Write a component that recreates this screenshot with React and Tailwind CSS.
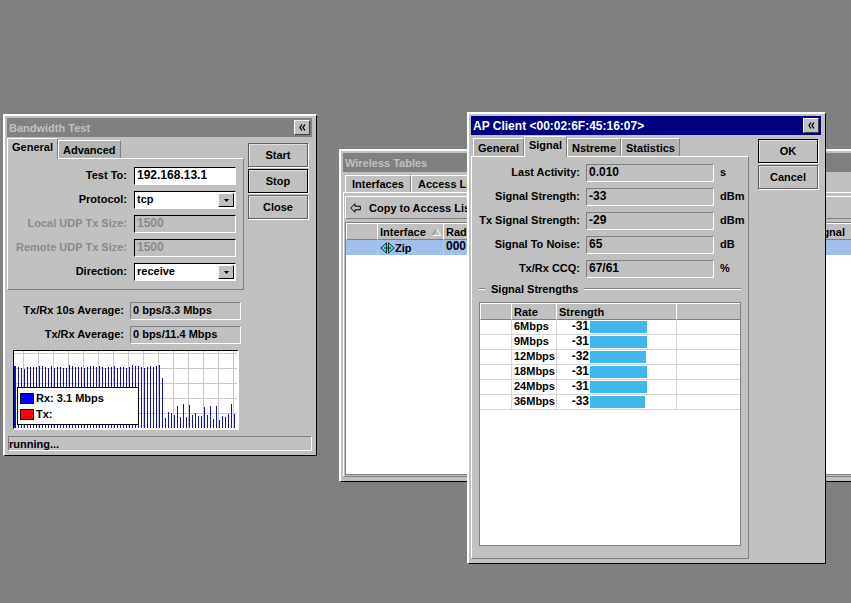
import React, { useState } from 'react';

const RATES = [
  { rate: '6Mbps', strength: -31 },
  { rate: '9Mbps', strength: -31 },
  { rate: '12Mbps', strength: -32 },
  { rate: '18Mbps', strength: -31 },
  { rate: '24Mbps', strength: -31 },
  { rate: '36Mbps', strength: -33 },
];

// throughput samples, one bar every 3px
const HIGH = [61, 60, 59, 61, 61, 61, 61, 62, 62, 61, 60, 62, 60, 61, 61, 60, 60, 63, 62, 61, 61, 61, 60];
const MIDDLE = [61, 62, 62, 61, 62, 61, 60, 61, 61, 62, 60, 61, 61, 60, 61, 63, 62, 62, 61, 60, 61, 62, 61, 62, 63];
const LOW = [50, 10, 16, 15, 13, 22, 11, 24, 11, 23, 13, 15, 12, 12, 21, 13, 22, 9, 22, 8, 12, 11, 14, 24, 14];
const SAMPLES = [...HIGH, ...MIDDLE, ...LOW];

const Window = ({ title, active, className, children }) => (
  <section
    className={`absolute flex flex-col border-t-2 border-l-2 border-r border-b border-t-white border-l-white border-r-black border-b-black bg-[#c0c0c0] pt-0.5 pl-0.5 pr-1 pb-1 ${className}`}
  >
    <header
      className={`flex h-[19px] items-center justify-between pl-0.5 pr-0.5 ${
        active ? 'bg-[#000080] text-white' : 'bg-[#808080] text-[#c0c0c0]'
      }`}
    >
      <h2 className={active ? 'text-[12px]' : 'text-[11px]'}>{title}</h2>
      <button
        type="button"
        aria-label="Collapse"
        className="flex h-[15px] w-4 items-center justify-center border border-t-white border-l-white border-r-[#404040] border-b-[#404040] bg-[#c0c0c0] text-black"
      >
        <svg width="7" height="7" viewBox="0 0 7 7" fill="none" stroke="currentColor" strokeWidth="1.3">
          <path d="M3 0.5 L1 3.5 L3 6.5 M6 0.5 L4 3.5 L6 6.5" />
        </svg>
      </button>
    </header>
    {children}
  </section>
);

const Tab = ({ active, onClick, children }) => (
  <button
    type="button"
    role="tab"
    aria-selected={!!active}
    onClick={onClick}
    className={`border-t border-l border-r border-t-white border-l-white border-r-[#808080] px-1 whitespace-nowrap ${
      active ? 'relative z-10 -mb-px bg-[#c0c0c0] pb-1' : 'mt-0.5 bg-[#b4b4b4]'
    }`}
  >
    {children}
  </button>
);

const PushButton = ({ primary, children }) => (
  <button
    type="button"
    className={`h-6 w-[60px] border bg-[#c0c0c0] shadow-[1px_1px_0_#fff,inset_1px_1px_0_#dfdfdf] ${
      primary ? 'border-black' : 'border-[#606060]'
    }`}
  >
    {children}
  </button>
);

const SUNKEN = 'h-[18px] w-full min-w-0 border border-r-white border-b-white pb-0.5 outline-none';

const TextField = ({ id, label, value, disabled }) => (
  <>
    <label htmlFor={id} className={`pb-0.5 text-right whitespace-nowrap ${disabled ? 'text-[#8a8a8a]' : ''}`}>
      {label}
    </label>
    <input
      id={id}
      defaultValue={value}
      disabled={disabled}
      className={`${SUNKEN} border-t-black border-l-black px-0.5 text-[12px] ${
        disabled ? 'bg-[#c0c0c0] text-[#8a8a8a]' : 'bg-white'
      }`}
    />
  </>
);

const SelectField = ({ id, label, options }) => (
  <>
    <label htmlFor={id} className="pb-0.5 text-right whitespace-nowrap">
      {label}
    </label>
    <div className="relative">
      <select id={id} className={`${SUNKEN} block appearance-none border-t-black border-l-black bg-white px-0.5`}>
        {options.map((option) => (
          <option key={option}>{option}</option>
        ))}
      </select>
      <span className="pointer-events-none absolute top-0.5 right-0.5 flex h-[14px] w-4 items-center justify-center border border-t-white border-l-white border-r-black border-b-black bg-[#c0c0c0]">
        <svg width="5" height="3" viewBox="0 0 5 3">
          <path d="M0 0 H5 L2.5 3 Z" />
        </svg>
      </span>
    </div>
  </>
);

const ReadOnlyField = ({ id, label, value, large }) => (
  <>
    <label htmlFor={id} className="pb-0.5 text-right whitespace-nowrap">
      {label}
    </label>
    <input
      id={id}
      readOnly
      value={value}
      className={`${SUNKEN} border-t-[#808080] border-l-[#808080] bg-[#c0c0c0] px-0.5 ${large ? 'text-[12px]' : 'text-[11px]'}`}
    />
  </>
);

const BandwidthChart = () => (
  <div className="relative mt-1.5 mr-[5px] ml-1.5 h-20 overflow-hidden border-t border-l border-r-2 border-b-2 border-t-black border-l-black border-r-white border-b-white bg-white">
    <svg className="block" width="223" height="77" viewBox="0 0 223 77" shapeRendering="crispEdges">
      {Array.from({ length: 15 }, (_, i) => (
        <rect key={i} x={9 + i * 15} y="0" width="1" height="77" fill="#c8c8c8" />
      ))}
      {Array.from({ length: 5 }, (_, i) => (
        <rect key={i} x="0" y={2 + i * 15} width="223" height="1" fill="#c8c8c8" />
      ))}
      <rect x="0" y="15" width="2" height="62" fill="#1010b0" />
      {SAMPLES.map((h, i) => (
        <rect key={i} x={4 + i * 3} y={77 - h} width="1" height={h} fill="#1010b0" />
      ))}
    </svg>
    <ul className="absolute bottom-[3px] left-[3px] flex h-[38px] w-[122px] flex-col justify-center border border-black bg-white px-0.5">
      <li className="flex h-4 items-center gap-0.5">
        <span className="h-[11px] w-[14px] border border-black bg-[#0000ff]" />
        Rx: 3.1 Mbps
      </li>
      <li className="flex h-4 items-center gap-0.5">
        <span className="h-[11px] w-[14px] border border-black bg-[#ff0000]" />
        Tx:
      </li>
    </ul>
  </div>
);

const BandwidthTest = () => (
  <Window title="Bandwidth Test" className="top-[114px] left-[3px] w-[314px]">
    <div className="flex">
      <div className="flex-1 pt-px">
        <div role="tablist" className="flex h-5">
          <Tab active>General</Tab>
          <Tab>Advanced</Tab>
        </div>
        <div className="grid grid-cols-[119px_1fr] items-center gap-x-[7px] gap-y-1.5 border border-t-white border-l-white border-r-[#808080] border-b-[#808080] py-2 pr-[7px]">
          <TextField id="test-to" label="Test To:" value="192.168.13.1" />
          <SelectField id="protocol" label="Protocol:" options={['tcp', 'udp']} />
          <TextField id="local-size" label="Local UDP Tx Size:" value="1500" disabled />
          <TextField id="remote-size" label="Remote UDP Tx Size:" value="1500" disabled />
          <SelectField id="direction" label="Direction:" options={['receive', 'send', 'both']} />
        </div>
        <div className="mt-3 grid grid-cols-[117px_1fr] items-center gap-x-1.5 gap-y-1.5 pr-[3px]">
          <ReadOnlyField id="avg-10s" label="Tx/Rx 10s Average:" value="0 bps/3.3 Mbps" />
          <ReadOnlyField id="avg" label="Tx/Rx Average:" value="0 bps/11.4 Mbps" />
        </div>
        <BandwidthChart />
      </div>
      <div className="flex flex-col gap-0.5 pt-1.5 pr-[5px] pl-1">
        <PushButton>Start</PushButton>
        <PushButton primary>Stop</PushButton>
        <PushButton>Close</PushButton>
      </div>
    </div>
    <footer className="mt-1.5 ml-px flex h-[15px] items-center border border-t-[#808080] border-l-[#808080] border-r-white border-b-white">
      running...
    </footer>
  </Window>
);

const HEAD_CELL = 'h-[17px] border-t border-l border-b border-t-white border-l-white border-b-[#808080] p-0 pl-0.5 text-left whitespace-nowrap';

const WirelessTables = () => (
  <Window title="Wireless Tables" className="top-[149px] -right-10 left-[339px]">
    <div role="tablist" className="mt-[3px] flex h-[17px] pl-0.5">
      {['Interfaces', 'Access List'].map((name) => (
        <button
          key={name}
          type="button"
          role="tab"
          className="border-t border-l border-r border-t-white border-l-white border-r-[#808080] px-1.5 whitespace-nowrap"
        >
          {name}
        </button>
      ))}
    </div>
    <div className="border border-t-white border-l-white border-r-[#808080] border-b-[#808080] px-px pt-[3px] pb-px">
      <div className="flex h-[23px] items-center border border-t-white border-l-white border-r-[#808080] border-b-[#808080] px-1">
        <button type="button" className="flex items-center gap-2 whitespace-nowrap">
          <svg width="11" height="10" viewBox="0 0 11 10" fill="none" stroke="#000">
            <path d="M0.7 5 L5 0.8 V3.2 H10.3 V6.8 H5 V9.2 Z" />
          </svg>
          Copy to Access List
        </button>
      </div>
      <div className="mt-[3px] h-[253px] overflow-hidden border border-[#808080] bg-white">
        <table className="w-full table-fixed border-separate border-spacing-0">
          <colgroup>
            <col className="w-[31px]" />
            <col className="w-[66px]" />
            <col />
            <col className="w-[74px]" />
          </colgroup>
          <thead className="bg-[#c0c0c0]">
            <tr>
              <th className={HEAD_CELL} />
              <th className={HEAD_CELL}>
                <span className="flex items-center justify-between pr-0.5">
                  Interface
                  <svg width="9" height="8" viewBox="0 0 9 8" fill="none">
                    <path d="M0.5 7.5 L4.5 0.5" stroke="#808080" />
                    <path d="M4.5 0.5 L8.5 7.5 H0.5" stroke="#fff" />
                  </svg>
                </span>
              </th>
              <th className={HEAD_CELL}>Radio Name</th>
              <th className={HEAD_CELL}>Signal</th>
            </tr>
          </thead>
          <tbody>
            <tr className="h-[15px] bg-[#a0c0ec] leading-[12px]">
              <td className="p-0" />
              <td className="border-l border-[#c8c8c8] p-0">
                <span className="flex items-center pl-0.5">
                  <svg width="15" height="12" viewBox="0 0 15 12" stroke="#000" strokeWidth="0.8">
                    <path d="M0.8 6 L6.5 0.8 V11.2 Z" fill="#40e0e0" />
                    <path d="M14.2 6 L8.5 0.8 V11.2 Z" fill="#40e0e0" />
                    <path d="M4 6 H11" />
                  </svg>
                  Zip
                </span>
              </td>
              <td className="border-l border-[#c8c8c8] p-0 pl-0.5 align-top text-[12px]">000</td>
              <td className="p-0" />
            </tr>
          </tbody>
        </table>
      </div>
    </div>
  </Window>
);

const SIGNAL_FIELDS = [
  { id: 'activity', label: 'Last Activity:', value: '0.010', unit: 's' },
  { id: 'signal', label: 'Signal Strength:', value: '-33', unit: 'dBm' },
  { id: 'tx-signal', label: 'Tx Signal Strength:', value: '-29', unit: 'dBm' },
  { id: 'noise', label: 'Signal To Noise:', value: '65', unit: 'dB' },
  { id: 'ccq', label: 'Tx/Rx CCQ:', value: '67/61', unit: '%' },
];

const RateTable = () => (
  <div className="mt-[5px] mr-[7px] ml-[7px] h-[244px] overflow-hidden border border-[#808080] bg-white">
    <table className="w-full table-fixed border-separate border-spacing-0">
      <colgroup>
        <col className="w-[31px]" />
        <col className="w-[45px]" />
        <col className="w-[120px]" />
        <col />
      </colgroup>
      <thead className="bg-[#c0c0c0]">
        <tr>
          <th className={HEAD_CELL} />
          <th className={HEAD_CELL}>Rate</th>
          <th className={HEAD_CELL}>Strength</th>
          <th className={HEAD_CELL} />
        </tr>
      </thead>
      <tbody>
        {RATES.map(({ rate, strength }) => (
          <tr key={rate} className="h-[15px] leading-[12px]">
            <td className="h-[15px] border-b border-[#d4d4d4] p-0" />
            <td className="border-b border-l border-[#d4d4d4] p-0 pl-0.5 align-top">{rate}</td>
            <td className="border-b border-l border-[#d4d4d4] p-0">
              <div className="flex h-[14px] items-center">
                <span className="w-8 self-start text-right text-[12px]">{strength}</span>
                <span className="ml-px h-3 bg-[#40b8ec]" style={{ width: 88 + strength }} />
              </div>
            </td>
            <td className="border-b border-l border-[#d4d4d4] p-0" />
          </tr>
        ))}
      </tbody>
    </table>
  </div>
);

const ApClient = () => {
  const [tab, setTab] = useState('Signal');

  return (
    <Window title="AP Client <00:02:6F:45:16:07>" active className="top-[112px] left-[467px] w-[359px]">
      <div className="flex">
        <div className="flex-1 pt-px">
          <div role="tablist" className="flex h-5 pl-0.5">
            {['General', 'Signal', 'Nstreme', 'Statistics'].map((name) => (
              <Tab key={name} active={name === tab} onClick={() => setTab(name)}>
                {name}
              </Tab>
            ))}
          </div>
          <div className="border border-t-white border-l-white border-r-[#808080] border-b-[#808080] pt-[7px] pb-3">
            <div className="grid grid-cols-[108px_1fr_28px] items-center gap-x-1.5 gap-y-1.5">
              {SIGNAL_FIELDS.map(({ id, label, value, unit }) => (
                <React.Fragment key={id}>
                  <ReadOnlyField id={id} label={label} value={value} large />
                  <span className="pb-0.5">{unit}</span>
                </React.Fragment>
              ))}
            </div>
            <div className="mt-[3px] mr-[7px] ml-[7px] flex h-4 items-center gap-1.5">
              <span className="h-0.5 w-1.5 border-t border-b border-t-[#808080] border-b-white" />
              <h3>Signal Strengths</h3>
              <span className="h-0.5 flex-1 border-t border-b border-t-[#808080] border-b-white" />
            </div>
            <RateTable />
          </div>
        </div>
        <div className="flex flex-col gap-0.5 pt-1 pr-[3px] pl-[9px]">
          <PushButton primary>OK</PushButton>
          <PushButton>Cancel</PushButton>
        </div>
      </div>
    </Window>
  );
};

const App = () => (
  <main className="relative min-h-screen overflow-hidden bg-[#808080] font-['Liberation_Sans',Arial,sans-serif] text-[11px] leading-[14px] font-bold text-black">
    <BandwidthTest />
    <WirelessTables />
    <ApClient />
  </main>
);

export default App;
